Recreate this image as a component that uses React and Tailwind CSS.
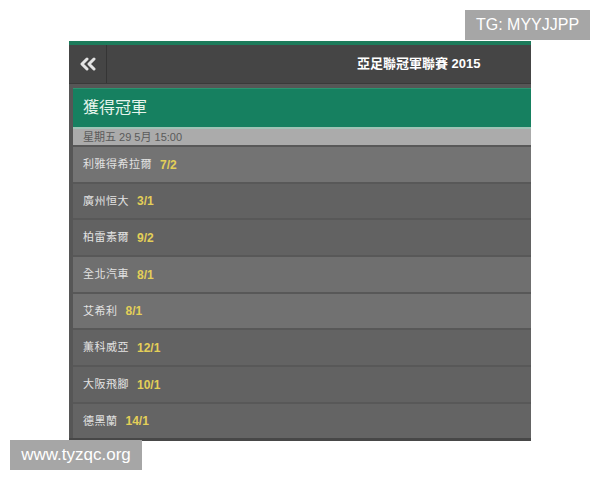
const rows = [
  { name: '利雅得希拉爾', odds: '7/2', bg: 'bg-[#737373]', h: 'h-[37px]' },
  { name: '廣州恒大', odds: '3/1', bg: 'bg-[#626262]', h: 'h-[36px]' },
  { name: '柏雷素爾', odds: '9/2', bg: 'bg-[#626262]', h: 'h-[37px]' },
  { name: '全北汽車', odds: '8/1', bg: 'bg-[#6f6f6f]', h: 'h-[37px]' },
  { name: '艾希利', odds: '8/1', bg: 'bg-[#717171]', h: 'h-[36px]' },
  { name: '薫科威亞', odds: '12/1', bg: 'bg-[#636363]', h: 'h-[37px]' },
  { name: '大阪飛腳', odds: '10/1', bg: 'bg-[#626262]', h: 'h-[37px]' },
  { name: '德黑蘭', odds: '14/1', bg: 'bg-[#646464]', h: 'h-[36px]' },
]

const cjk = { fontFamily: '"Liberation Sans", "Noto Sans CJK TC", sans-serif' }

export default function App() {
  return (
    <div className="relative w-[600px] h-[480px] bg-white overflow-hidden" style={cjk}>
      {/* watermark top */}
      <div className="absolute left-[465px] top-[10px] w-[125px] h-[30px] bg-[#a6a6a6] flex items-center justify-center text-white text-[16px]">
        TG: MYYJJPP
      </div>

      <div className="ml-[69px] pt-[41px] w-[462px] flex flex-col">
        <div className="h-[4px] bg-[#1d7b5b]" />

        {/* Header */}
        <div className="h-[39px] bg-[#454545] flex items-center border-b border-[#3a3a3a]">
          <div className="w-[38px] h-full border-r border-[#353535] flex items-center justify-center">
            <svg width="18" height="14" viewBox="0 0 18 14" fill="none" stroke="#e4e4e4" strokeWidth="3" strokeLinecap="round" strokeLinejoin="round">
              <polyline points="8,2 3,7 8,12" />
              <polyline points="15,2 10,7 15,12" />
            </svg>
          </div>
          <div className="flex-1 pl-[250px] text-white text-[13px] font-bold">亞足聯冠軍聯賽 2015</div>
        </div>

        {/* Market */}
        <div className="bg-[#565656] pt-[4px] pl-[4px]">
          <div className="h-[39px] bg-[#168060] flex items-center pl-[10px] text-[#e6f4ec] text-[16px] border-t border-[#2a9470]">
            獲得冠軍
          </div>
          <div className="h-[2px] bg-[#9fc4b6]" />
          <div className="h-[16px] bg-[#ababab] flex items-center pl-[10px] text-[#5a5a5a] text-[11px] leading-none">
            星期五 29 5月 15:00
          </div>
          {rows.map((r) => (
            <div key={r.name} className={`${r.h} ${r.bg} border-t-2 border-[#585858] flex items-center pl-[10px] text-[11px]`}>
              <span className="text-[#e2e2e2] tracking-[0.5px]">{r.name}</span>
              <span className="ml-[8px] text-[#e3cf58] font-semibold text-[12px]">{r.odds}</span>
            </div>
          ))}
        </div>
        <div className="h-[3px] bg-[#474747]" />
      </div>

      {/* watermark bottom */}
      <div className="absolute left-[10px] top-[440px] w-[132px] h-[30px] bg-[#a6a6a6] flex items-center justify-center text-white text-[17px]">
        www.tyzqc.org
      </div>
    </div>
  )
}
